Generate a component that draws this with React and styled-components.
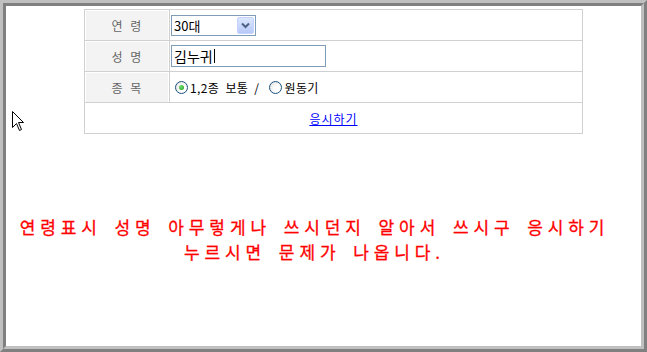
import React from "react";
import styled, { createGlobalStyle } from "styled-components";

const Global = createGlobalStyle`
  html, body { margin: 0; padding: 0; background: #fff; }
  body { font-family: "Noto Sans CJK KR", "Noto Sans", sans-serif; }
`;

const Frame = styled.div`
  width: 647px;
  height: 352px;
  box-sizing: border-box;
  border: 3px solid;
  border-color: #c0c0c0 #808080 #808080 #c0c0c0;
  position: relative;
`;

const Inner = styled.div`
  height: 100%;
  box-sizing: border-box;
  border: 3px solid;
  border-color: #808080 #c0c0c0 #c0c0c0 #808080;
  background: #fff;
  padding-top: 3px;
`;

const Table = styled.div`
  margin-left: 78px;
  width: 499px;
  box-sizing: border-box;
  border: 1px solid #d0d0d0;
  border-bottom: none;
  display: grid;
  grid-template-columns: 85px 1fr;
  grid-auto-rows: 31px;
`;

const Label = styled.div`
  background: #f3f3f3;
  box-shadow: inset 1px 1px 0 #fff, inset -1px 0 0 #fff;
  border-bottom: 1px solid #d0d0d0;
  border-right: 1px solid #d0d0d0;
  display: flex;
  align-items: center;
  justify-content: center;
  font-size: 12px;
  color: #666;
  letter-spacing: 1px;
  word-spacing: 3px;
`;

const Field = styled.div`
  border-bottom: 1px solid #d0d0d0;
  display: flex;
  align-items: center;
  padding-left: 1px;
  font-size: 12px;
  color: #000;
`;

const FullCell = styled.div`
  grid-column: 1 / span 2;
  border-bottom: 1px solid #d0d0d0;
  display: flex;
  align-items: center;
  justify-content: center;
  font-size: 12px;
`;

const Select = styled.div`
  width: 85px;
  height: 21px;
  box-sizing: border-box;
  border: 1px solid #7f9db9;
  display: flex;
  align-items: stretch;
  background: #fff;
`;

const SelectText = styled.span`
  flex: 1;
  display: flex;
  align-items: center;
  padding-left: 2px;
  font-size: 13px;
`;

const SelectButton = styled.span`
  width: 15px;
  margin: 1px;
  border-radius: 2px;
  border: 1px solid #c3d3fd;
  background: linear-gradient(#dce6fe, #b7c9f7);
  display: flex;
  align-items: center;
  justify-content: center;
`;

const TextInput = styled.div`
  width: 155px;
  height: 22px;
  box-sizing: border-box;
  border: 1px solid #7f9db9;
  display: flex;
  align-items: center;
  padding-left: 2px;
  font-size: 14px;
`;

const Caret = styled.span`
  display: inline-block;
  width: 1px;
  height: 14px;
  background: #000;
  margin-left: 1px;
`;

const RadioGroup = styled.div`
  display: flex;
  align-items: center;
  padding-left: 4px;
`;

const Radio = styled.span`
  width: 11px;
  height: 11px;
  border-radius: 50%;
  border: 1px solid #1c5180;
  background: radial-gradient(circle at 65% 65%, #fff 30%, #dcdcd7 100%);
  display: inline-flex;
  align-items: center;
  justify-content: center;
  margin-right: 2px;
  flex: none;
  &::after {
    content: "";
    width: 5px;
    height: 5px;
    border-radius: 50%;
    background: ${(p) => (p.$checked ? "radial-gradient(circle at 35% 35%, #6fdc6f, #21a121)" : "transparent")};
  }
`;

const RadioText = styled.span`
  margin-right: ${(p) => (p.$gap ? "10px" : "0")};
  word-spacing: 3px;
  letter-spacing: 0.4px;
`;

const Link = styled.a`
  color: #0000ff;
  text-decoration: underline;
  font-size: 12px;
  letter-spacing: 1px;
  cursor: pointer;
`;

const Notice = styled.div`
  margin-top: 80px;
  text-align: center;
  padding-right: 18px;
  color: #ff0000;
  font-size: 17px;
  font-weight: normal;
  letter-spacing: 4.9px;
  word-spacing: 4px;
  line-height: 25px;
  -webkit-text-stroke: 0.3px #ff0000;
`;

const Cursor = styled.svg`
  position: absolute;
  left: 9px;
  top: 108px;
`;

export default function App() {
  return (
    <>
      <Global />
      <Frame>
        <Inner>
          <Table>
            <Label>연 령</Label>
            <Field>
              <Select>
                <SelectText>30대</SelectText>
                <SelectButton>
                  <svg width="9" height="7" viewBox="0 0 9 7">
                    <path d="M1 1.5 L4.5 5 L8 1.5" fill="none" stroke="#4d6185" strokeWidth="2" />
                  </svg>
                </SelectButton>
              </Select>
            </Field>
            <Label>성 명</Label>
            <Field>
              <TextInput>
                김누귀<Caret />
              </TextInput>
            </Field>
            <Label>종 목</Label>
            <Field>
              <RadioGroup>
                <Radio $checked />
                <RadioText $gap>1,2종 보통 /</RadioText>
                <Radio />
                <RadioText>원동기</RadioText>
              </RadioGroup>
            </Field>
            <FullCell>
              <Link>응시하기</Link>
            </FullCell>
          </Table>
          <Notice>
            연령표시 성명 아무렇게나 쓰시던지 알아서 쓰시구 응시하기
            <br />
            누르시면 문제가 나옵니다.
          </Notice>
        </Inner>
        <Cursor width="13" height="21" viewBox="0 0 13 21">
          <path d="M0.5 0.5 L0.5 16.5 L4.5 12.5 L7.5 19.5 L9.5 18.5 L6.5 11.5 L11.5 11.5 Z" fill="#fff" stroke="#000" strokeWidth="1" />
        </Cursor>
      </Frame>
    </>
  );
}
